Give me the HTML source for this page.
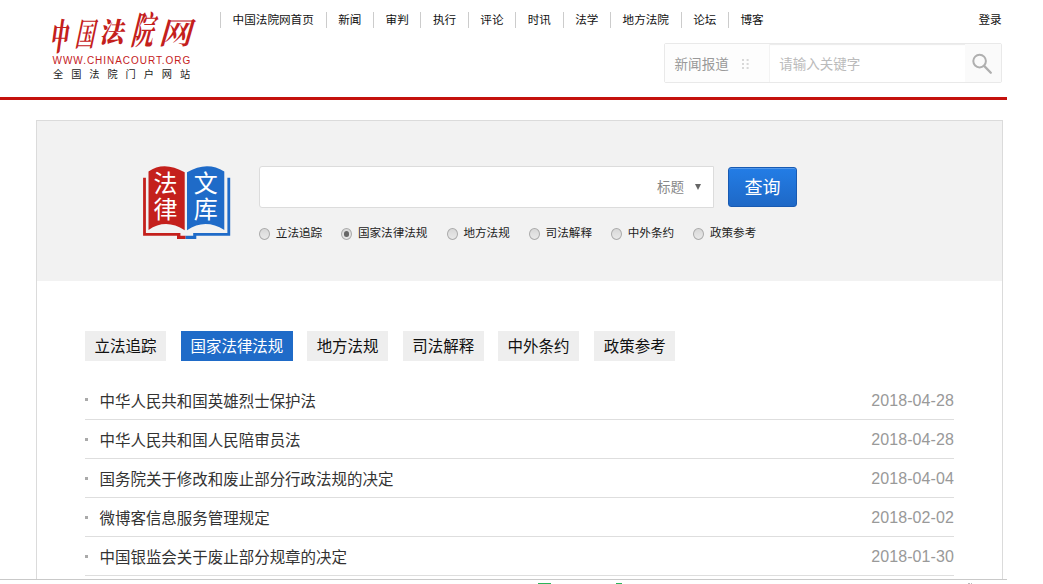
<!DOCTYPE html>
<html lang="zh-CN">
<head>
<meta charset="utf-8">
<title>法律文库 - 中国法院网</title>
<style>
*{margin:0;padding:0;box-sizing:border-box;}
html,body{width:1043px;height:584px;overflow:hidden;background:#fff;}
body{position:relative;font-family:"Liberation Sans","Noto Sans CJK SC",sans-serif;color:#222;}
a{color:inherit;text-decoration:none;}
.abs{position:absolute;white-space:nowrap;}

/* ---------- header ---------- */
#redline{left:0;top:96.8px;width:1007px;height:3.2px;background:#c4110d;}
#logo-cn{left:0;top:0;width:220px;height:60px;color:#c4201c;font-family:"Liberation Serif","Noto Serif CJK SC",serif;font-weight:600;}
#logo-cn span{position:absolute;display:block;line-height:1;transform-origin:0 0;}
#logo-url{left:52.5px;top:54.8px;height:11px;line-height:11px;font-size:10px;letter-spacing:0.96px;color:#c4201c;}
#logo-sub{left:53px;top:67.5px;height:13px;line-height:13px;font-size:10.2px;letter-spacing:7.95px;color:#1a1a1a;}

#nav{left:220px;top:12px;height:16px;display:flex;font-size:11.6px;line-height:16px;color:#111;}
#nav a{display:block;border-left:1px solid #ccc;padding:0 11.6px 0 11.6px;height:16px;}
#nav a.w7{width:105.6px;}
#nav a.w2{width:47.4px;}
#nav a.w4{width:70.6px;}
#login{left:978.5px;top:12px;height:16px;line-height:16px;font-size:11.6px;color:#111;}

#hsearch{left:664px;top:43px;width:338px;height:39.6px;border:1px solid #e9e9e9;border-radius:2px;background:#fff;}
#hs-left{left:0;top:0;width:104px;height:37.6px;background:#fdfdfd;}
#hs-mid{left:104px;top:0;width:196px;height:37.6px;background:#fff;box-shadow:inset 0 2px 1px -1px #ececec;border-left:1px solid #f3f3f3;}
#hs-btn{left:300px;top:0;width:36px;height:37.6px;background:#fafafa;}
#hs-cat{left:9.6px;top:11.6px;height:18px;line-height:18px;font-size:13.53px;color:#999;}
#hs-ph{left:114.2px;top:11.6px;height:18px;line-height:18px;font-size:13.53px;color:#bbb;}
#hs-dots{left:76.8px;top:14.8px;width:7px;height:10px;}

#lc1{left:54px;top:19.6px;font-size:26px;font-weight:800;transform:skewX(-8deg) scale(0.673,1.409);}
#lc2{left:80.3px;top:19.5px;font-size:26px;font-weight:600;transform:skewX(-12deg) scale(0.751,1.25);}
#lc3{left:104px;top:19.6px;font-size:26px;font-weight:800;transform:skewX(-12deg) scale(0.924,1.049);}
#lc4{left:138.3px;top:13px;font-size:26px;font-weight:700;transform:skewX(-14deg) scale(0.859,1.469);}
#lc5{left:164.5px;top:20.2px;font-size:26px;font-weight:600;transform:skewX(-16deg) scale(1.287,1.16);}
/* ---------- main container ---------- */
#main{left:36.2px;top:120px;width:966.6px;height:460px;border:1px solid #dbdbdb;border-bottom:none;background:#fff;}
#gray{left:0;top:0;width:964.6px;height:159.8px;background:#f2f2f2;}

#sinput{left:259.3px;top:166.1px;width:454.8px;height:41.6px;border:1px solid #dcdcdc;border-radius:3px 0 0 3px;background:#fff;}
#ssel{left:657px;top:178.2px;height:20px;line-height:20px;font-size:13.53px;color:#888;}
#sarrow{left:694.8px;top:184.2px;width:0;height:0;border-left:3.3px solid transparent;border-right:3.3px solid transparent;border-top:6px solid #666;}
#sbtn{left:728px;top:167.1px;width:68.8px;height:39.7px;border:1px solid #185ab2;border-radius:3px;background:linear-gradient(#237de6,#1e68c6);box-shadow:inset 0 1px 0 rgba(255,255,255,.22);color:#fff;font-size:18px;line-height:41.4px;overflow:hidden;text-align:center;}

.radio{width:11px;height:11.8px;border-radius:50%;border:1px solid #aaa;background:linear-gradient(#d8d8d8,#e9e9e9);top:228.1px;}
.radio.on::after{content:"";position:absolute;left:1.7px;top:2.1px;width:5.6px;height:5.6px;border-radius:50%;background:#666;}
.rl{top:223.7px;height:17px;line-height:17px;font-size:11.6px;color:#222;}

/* ---------- tabs ---------- */
.tab{top:330.8px;height:30.1px;line-height:32.5px;overflow:hidden;font-size:15.47px;background:#eee;color:#111;text-align:center;}
.tab.on{background:#1f6bc8;color:#fff;}

/* ---------- list ---------- */
.row{left:84.9px;width:869.2px;height:39.1px;border-bottom:1px solid #dedede;}
.row i{position:absolute;left:0;top:17.6px;width:3px;height:3px;background:#aaa;}
.row a{position:absolute;left:14.6px;top:9.7px;height:22px;line-height:22px;font-size:15.47px;color:#333;}
.row span{position:absolute;right:0.1px;top:9px;height:22px;line-height:22px;font-size:16px;letter-spacing:0.1px;color:#999;}

#botline{left:0;top:578.9px;width:1007px;height:1.1px;background:#c9c9c9;}
</style>
</head>
<body>

<!-- header -->
<div class="abs" id="logo-cn"><span id="lc1">中</span><span id="lc2">国</span><span id="lc3">法</span><span id="lc4">院</span><span id="lc5">网</span></div>
<div class="abs" id="logo-url">WWW.CHINACOURT.ORG</div>
<div class="abs" id="logo-sub">全国法院门户网站</div>

<div class="abs" id="nav">
  <a class="w7" href="#">中国法院网首页</a>
  <a class="w2" href="#">新闻</a>
  <a class="w2" href="#">审判</a>
  <a class="w2" href="#">执行</a>
  <a class="w2" href="#">评论</a>
  <a class="w2" href="#">时讯</a>
  <a class="w2" href="#">法学</a>
  <a class="w4" href="#">地方法院</a>
  <a class="w2" href="#">论坛</a>
  <a class="w2" href="#">博客</a>
</div>
<a class="abs" id="login" href="#">登录</a>

<div class="abs" id="hsearch">
  <div class="abs" id="hs-left"></div>
  <div class="abs" id="hs-mid"></div>
  <div class="abs" id="hs-btn"></div>
  <div class="abs" id="hs-cat">新闻报道</div>
  <svg class="abs" id="hs-dots" viewBox="0 0 7 10"><g fill="#d8d8d8"><rect x="0" y="0" width="2" height="2"/><rect x="4.6" y="0" width="2" height="2"/><rect x="0" y="4" width="2" height="2"/><rect x="4.6" y="4" width="2" height="2"/><rect x="0" y="8" width="2" height="2"/><rect x="4.6" y="8" width="2" height="2"/></g></svg>
  <div class="abs" id="hs-ph">请输入关键字</div>
  <svg class="abs" style="left:300px;top:0;width:36px;height:37.6px" viewBox="0 0 36 37.4"><circle cx="14.6" cy="17" r="6.3" fill="none" stroke="#afafaf" stroke-width="2"/><path d="M19.1 21.8 L25.8 28.7" stroke="#afafaf" stroke-width="2.3" stroke-linecap="round"/></svg>
</div>

<div class="abs" id="redline"></div>

<!-- main -->
<div class="abs" id="main"><div class="abs" id="gray"></div></div>

<!-- book icon -->
<svg class="abs" id="book" style="left:140px;top:160px;width:94px;height:84px" viewBox="140 160 94 84">
  <path d="M143.1 177.8 H145.9 V232.9 H180.4 V235.8 H185.6 V238.9 H177 V235.8 H143.1 Z" fill="#c4201c"/>
  <path d="M230.2 177.8 H227.4 V232.9 H193.2 V235.8 H185.6 V238.9 H196.3 V235.8 H230.2 Z" fill="#1f6bc8"/>
  <path d="M148.5 171.5 Q164 160.5 184.7 172.3 V230.3 Q166 218 148.5 230 Z" fill="#c4201c"/>
  <path d="M187 172.3 Q207 160.5 224.3 171.5 V230 Q205 218 187 230.3 Z" fill="#1f6bc8"/>
  <g fill="#fff" font-family="Liberation Sans, Noto Sans CJK SC, sans-serif" font-size="24" text-anchor="middle">
    <text x="165.6" y="191.5">法</text>
    <text x="165.6" y="217.9">律</text>
    <text x="205.8" y="191.5">文</text>
    <text x="205.8" y="217.9">库</text>
  </g>
</svg>

<!-- search -->
<div class="abs" id="sinput"></div>
<div class="abs" id="ssel">标题</div>
<div class="abs" id="sarrow"></div>
<div class="abs" id="sbtn">查询</div>

<div class="abs radio" style="left:259px"></div><div class="abs rl" style="left:275.8px">立法追踪</div>
<div class="abs radio on" style="left:341.1px"></div><div class="abs rl" style="left:357.9px">国家法律法规</div>
<div class="abs radio" style="left:446.6px"></div><div class="abs rl" style="left:463.4px">地方法规</div>
<div class="abs radio" style="left:528.8px"></div><div class="abs rl" style="left:545.6px">司法解释</div>
<div class="abs radio" style="left:610.9px"></div><div class="abs rl" style="left:627.7px">中外条约</div>
<div class="abs radio" style="left:692.7px"></div><div class="abs rl" style="left:709.9px">政策参考</div>

<!-- tabs -->
<a class="abs tab" style="left:84.9px;width:81.2px" href="#">立法追踪</a>
<a class="abs tab on" style="left:180.8px;width:112.2px" href="#">国家法律法规</a>
<a class="abs tab" style="left:307px;width:81.2px" href="#">地方法规</a>
<a class="abs tab" style="left:402.7px;width:81.2px" href="#">司法解释</a>
<a class="abs tab" style="left:498.2px;width:80.7px" href="#">中外条约</a>
<a class="abs tab" style="left:594.1px;width:81.2px" href="#">政策参考</a>

<!-- list -->
<div class="abs row" style="top:380.9px"><i></i><a href="#">中华人民共和国英雄烈士保护法</a><span>2018-04-28</span></div>
<div class="abs row" style="top:420px"><i></i><a href="#">中华人民共和国人民陪审员法</a><span>2018-04-28</span></div>
<div class="abs row" style="top:459.1px"><i></i><a href="#">国务院关于修改和废止部分行政法规的决定</a><span>2018-04-04</span></div>
<div class="abs row" style="top:498.2px"><i></i><a href="#">微博客信息服务管理规定</a><span>2018-02-02</span></div>
<div class="abs row" style="top:537.3px"><i></i><a href="#">中国银监会关于废止部分规章的决定</a><span>2018-01-30</span></div>

<div class="abs" id="botline"></div>
<div class="abs" style="left:537.6px;top:583px;width:13.8px;height:1px;background:#2db45a"></div>
<div class="abs" style="left:616px;top:583px;width:6px;height:1px;background:#2db45a"></div>
<div class="abs" style="left:968px;top:583px;width:1.5px;height:1px;background:#bbb"></div>
<div class="abs" style="left:970.5px;top:583px;width:1.5px;height:1px;background:#bbb"></div>

</body>
</html>
